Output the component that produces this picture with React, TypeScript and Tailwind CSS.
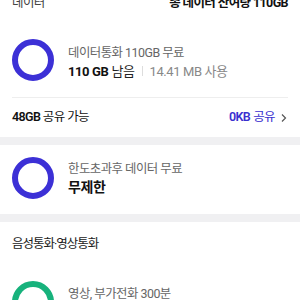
import React from "react";

const font = { fontFamily: 'Roboto, "Noto Sans CJK KR", "Noto Sans", sans-serif' };

export default function App() {
  return (
    <div className="w-[300px] h-[300px] overflow-hidden bg-white" style={font}>
      <div className="flex justify-between items-center px-3 -mt-[7px] h-[20px] text-[12.5px] leading-[20px] tracking-[-0.6px]">
        <span className="text-[#444]">데이터</span>
        <span className="font-bold text-[#111]">총 데이터 잔여량 110GB</span>
      </div>

      <div className="flex items-center px-3 pt-[26px] pb-[16px]">
        <div className="w-[42px] h-[42px] rounded-full border-[6px] border-[#3c30d6] shrink-0" />
        <div className="ml-[14px] flex flex-col mt-[4px]">
          <span className="text-[12.4px] leading-[18px] text-[#666] tracking-[-0.5px]">데이터통화 110GB 무료</span>
          <div className="flex items-center text-[13px] leading-[19px] tracking-[-0.4px]">
            <span className="font-bold text-[#111]">110 GB</span>
            <span className="ml-[3px] text-[#222]">남음</span>
            <span className="mx-[7px] w-px h-[10px] bg-[#ddd]" />
            <span className="text-[#888]">14.41 MB 사용</span>
          </div>
        </div>
      </div>

      <div className="mx-3 h-px bg-[#eeeeee]" />

      <div className="flex justify-between items-center px-3 h-[39px] text-[12.5px] tracking-[-0.6px]">
        <span className="text-[#111]">
          <span className="font-semibold">48GB</span> 공유 가능
        </span>
        <span className="flex items-center text-[#3a2fcf]">
          <span className="font-semibold">0KB</span>
          <span className="ml-[3px]">공유</span>
          <svg width="8" height="10" viewBox="0 0 8 10" className="ml-[5px]">
            <path d="M2 1.5 L5.5 5 L2 8.5" fill="none" stroke="#555" strokeWidth="1.2" />
          </svg>
        </span>
      </div>

      <div className="h-[8px] bg-[#f0f0f2]" />

      <div className="flex items-center px-3 pt-[12px] pb-[15px]">
        <div className="w-[42px] h-[42px] rounded-full border-[6px] border-[#3c30d6] shrink-0" />
        <div className="ml-[14px] flex flex-col">
          <span className="text-[12.4px] leading-[18px] text-[#666] tracking-[-0.5px]">한도초과후 데이터 무료</span>
          <span className="text-[14px] leading-[19px] font-bold text-[#111] tracking-[-0.4px]">무제한</span>
        </div>
      </div>

      <div className="h-[8px] bg-[#f0f0f2]" />

      <div className="px-3 h-[44px] flex items-center text-[12.5px] text-[#222] tracking-[-1px]">
        음성통화·영상통화
      </div>

      <div className="flex items-start px-3 pt-[15px]">
        <div className="w-[42px] h-[42px] rounded-full border-[6px] border-[#17b27c] shrink-0" />
        <div className="ml-[14px] flex flex-col pt-[4px]">
          <span className="text-[12.4px] leading-[18px] text-[#666] tracking-[-0.5px]">영상, 부가전화 300분</span>
        </div>
      </div>
    </div>
  );
}
